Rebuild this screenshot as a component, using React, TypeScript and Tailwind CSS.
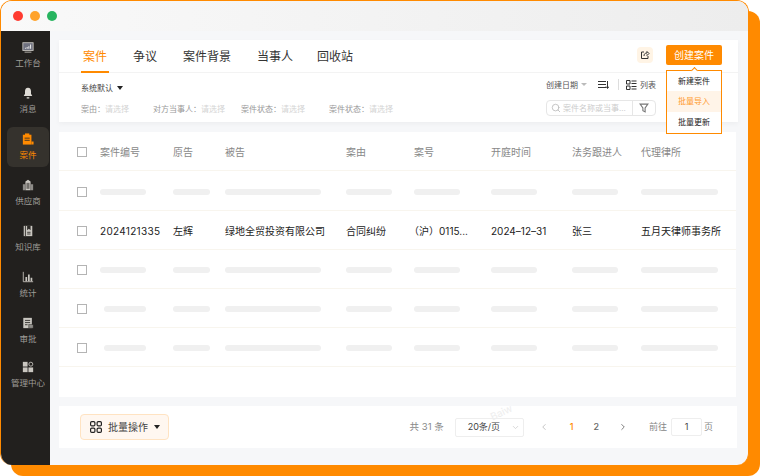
import { ChevronDown, ChevronLeft, ChevronRight, Search } from 'lucide-react';

const font = 'font-["Inter","Noto_Sans_CJK_SC",sans-serif]';

const navItems = [
  { label: '工作台', icon: 'desk' },
  { label: '消息', icon: 'bell' },
  { label: '案件', icon: 'case', active: true },
  { label: '供应商', icon: 'building' },
  { label: '知识库', icon: 'book' },
  { label: '统计', icon: 'chart' },
  { label: '审批', icon: 'doc' },
  { label: '管理中心', icon: 'grid', nudge: true },
];

function NavIcon({ name, active }: { name: string; active?: boolean }) {
  const c = active ? '#ff8a00' : '#c9c6c0';
  return (
    <svg width="12" height="12" viewBox="0 0 14 14" fill="none">
      {name === 'desk' && (
        <>
          <rect x="1" y="2" width="12" height="9" fill="#6f7180" stroke={c} strokeWidth="1" />
          <path d="M4 9V8M6 9V7M8 9V6M10 9V4" stroke="#e8e8e8" strokeWidth="1.2" />
          <path d="M3 13h8" stroke={c} strokeWidth="1" />
        </>
      )}
      {name === 'bell' && (
        <>
          <path d="M7 1c-2.5 0-3.5 2-3.5 4v3L2 10.5h10L10.5 8V5C10.5 3 9.5 1 7 1z" fill="#dedbd5" />
          <path d="M5.5 12h3v1.5h-3z" fill="#dedbd5" />
        </>
      )}
      {name === 'case' && (
        <>
          <rect x="1" y="2" width="10" height="11.5" fill={c} />
          <rect x="3.5" y="0.5" width="5" height="2.5" fill={c} />
          <path d="M3 6h6M3 8.5h6" stroke="#2c2a27" strokeWidth="1" />
          <path d="M11 10h2.5v3.5H11z" fill={c} />
        </>
      )}
      {name === 'building' && (
        <>
          <path d="M4 3l3-2 3 2v10H4z" fill={c} />
          <path d="M1 6h3v7H1zM10 6h3v7h-3z" fill="#8e8c88" />
          <path d="M6 4.5v7M8 4.5v7" stroke="#2c2a27" strokeWidth="1" />
        </>
      )}
      {name === 'book' && (
        <>
          <rect x="2" y="1" width="10" height="12" fill={c} />
          <path d="M4 1v12" stroke="#2c2a27" strokeWidth="1" />
          <path d="M6 1h4v5L8 4.5 6 6z" fill="#2c2a27" />
          <path d="M6 8.5h4M6 10.5h4" stroke="#2c2a27" strokeWidth="1" />
        </>
      )}
      {name === 'chart' && (
        <>
          <path d="M1.5 1v11.5H13" stroke={c} strokeWidth="1" />
          <path d="M4 7h2v5H4zM7 4h2v8H7zM10 8h2v4h-2z" fill={c} />
        </>
      )}
      {name === 'doc' && (
        <>
          <rect x="1.5" y="1" width="10" height="12" fill={c} />
          <path d="M3.5 4h6M3.5 6.5h6M3.5 9h3" stroke="#2c2a27" strokeWidth="1" />
          <rect x="8" y="9" width="5" height="4" fill="#8e8c88" stroke="#2c2a27" strokeWidth=".6" />
        </>
      )}
      {name === 'grid' && (
        <>
          <rect x="1" y="1" width="5.5" height="5.5" fill={c} />
          <rect x="1" y="7.5" width="5.5" height="5.5" fill={c} />
          <rect x="7.5" y="7.5" width="5.5" height="5.5" fill={c} />
          <circle cx="10.3" cy="3.7" r="2.3" stroke={c} strokeWidth="1" />
        </>
      )}
    </svg>
  );
}

function Sidebar() {
  return (
    <aside className="flex w-[49px] shrink-0 flex-col items-start gap-[6px] bg-[#22201e] pl-[6px] pt-[4px]">
      {navItems.map((item) => (
        <div
          key={item.label}
          className={`flex h-[40px] w-[42px] flex-col items-center justify-center gap-[5px] rounded-[6px] ${item.active ? 'bg-[#35322d]' : ''} ${item.nudge ? '-mt-[2px]' : ''}`}
        >
          <NavIcon name={item.icon} active={item.active} />
          <span
            className={`whitespace-nowrap text-[8.5px] leading-[11px] ${item.active ? 'text-[#ff8a00]' : 'text-[#9f9d98]'}`}
          >
            {item.label}
          </span>
        </div>
      ))}
    </aside>
  );
}

function Caret() {
  return <span className="inline-block border-x-[3.5px] border-t-[4px] border-x-transparent border-t-[#222]" />;
}

function Tabs() {
  const tabs = ['案件', '争议', '案件背景', '当事人', '回收站'];
  return (
    <div className="flex h-[33px] items-stretch border-b border-[#f3f3f3] pl-[22px]">
      <div className="flex gap-[22px]">
        {tabs.map((t, i) => (
          <div
            key={t}
            className={`flex h-[33px] items-center border-b-2 px-[2px] pt-[3px] text-[12px] ${i === 0 ? 'border-[#ff8a00] text-[#ff8a00]' : 'border-transparent text-[#333]'} ${i === 4 ? '-ml-[2px]' : ''}`}
          >
            {t}
          </div>
        ))}
      </div>
      <div className="ml-auto flex items-start gap-[13px] pr-[16px] pt-[5px]">
        <div className="mt-[2px] flex h-4 w-4 items-center justify-center rounded-[4px] bg-[#fff4e5]">
          <svg width="10" height="10" viewBox="0 0 10 10" fill="none" stroke="#333" strokeWidth="1">
            <path d="M4 2H1.5v6.5H8V6" />
            <path d="M4 6c0-2 1-3 3-3V1.5L9 3.5 7 5.5V4.5" />
          </svg>
        </div>
        <div className="flex h-5 w-14 items-center justify-center rounded-[2px] bg-[#ff8a00] text-[10px] text-white">
          创建案件
        </div>
      </div>
    </div>
  );
}

function Filters() {
  const fields = [
    { label: '案由\uFF1A', w: 'w-[72px]' },
    { label: '对方当事人\uFF1A', w: 'w-[88px]' },
    { label: '案件状态\uFF1A', w: 'w-[88px]' },
    { label: '案件状态\uFF1A', w: 'w-[70px]' },
  ];
  return (
    <div className="flex h-[49px] justify-between pl-[22px] pr-[82px]">
      <div className="pt-[10px]">
        <div className="flex h-[10px] items-center gap-[4px] text-[8px] text-[#444]">
          系统默认 <Caret />
        </div>
        <div className="mt-[11px] flex text-[8px] leading-[10px]">
          {fields.map((f, i) => (
            <div key={i} className={`${f.w} whitespace-nowrap`}>
              <span className="text-[#999]">{f.label}</span>
              <span className="text-[#d4d4d4]">请选择</span>
            </div>
          ))}
        </div>
      </div>
      <div className="flex w-[110px] flex-col pt-[6px]">
        <div className="flex h-[11px] items-center text-[8px] text-[#555]">
          <span>创建日期</span>
          <span className="ml-[3px] inline-block border-x-[3px] border-t-[3px] border-x-transparent border-t-[#bbb]" />
          <svg className="ml-[11px]" width="11" height="10" viewBox="0 0 11 10" fill="none" stroke="#333" strokeWidth="1">
            <path d="M0 1.5h8M0 4.5h8M0 7.5h8M9.5 1v7M8 6.5l1.5 2 1.5-2" />
          </svg>
          <span className="ml-[9px] h-[11px] w-px bg-[#ddd]" />
          <svg className="ml-[7px]" width="11" height="10" viewBox="0 0 11 10" fill="none" stroke="#333" strokeWidth="1">
            <path d="M.5.5h3.5v3.5H.5zM.5 6h3.5v3.5H.5zM5.5 1h5M5.5 3.5h5M5.5 6.5h5M5.5 9h5" />
          </svg>
          <span className="ml-[3px]">列表</span>
        </div>
        <div className="mt-[10px] flex h-[16px] w-[110px] items-center rounded-[4px] border border-[#e6e6e6] bg-white">
          <Search size={10} className="ml-[4px] shrink-0 text-[#bbb]" />
          <span className="ml-[2px] w-[69px] shrink-0 whitespace-nowrap text-[8px] text-[#ccc]">案件名称或当事...</span>
          <span className="flex h-full flex-1 items-center justify-center border-l border-[#e6e6e6]">
            <svg width="10" height="10" viewBox="0 0 9 9" fill="none" stroke="#777" strokeWidth="1">
              <path d="M1 1h7L5.5 4.5V8L3.5 7V4.5z" />
            </svg>
          </span>
        </div>
      </div>
    </div>
  );
}

const columns = [
  { label: '案件编号', w: 'w-[73px]', bar: 'w-[46px]', value: '2024121335', extra: 'tracking-[0.3px]' },
  { label: '原告', w: 'w-[52px]', bar: 'w-[37px]', value: '左辉', extra: '' },
  { label: '被告', w: 'w-[121px]', bar: 'w-[96px]', value: '绿地全贸投资有限公司', extra: '' },
  { label: '案由', w: 'w-[68px]', bar: 'w-[46px]', value: '合同纠纷', extra: '' },
  { label: '案号', w: 'w-[77px]', bar: 'w-[46px]', value: '\uFF08沪\uFF090115...', extra: '-ml-[5px]' },
  { label: '开庭时间', w: 'w-[81px]', bar: 'w-[46px]', value: '2024–12–31', extra: '' },
  { label: '法务跟进人', w: 'w-[69px]', bar: 'w-[46px]', value: '张三', extra: '' },
  { label: '代理律所', w: 'flex-1', bar: 'w-[77px]', value: '五月天律师事务所', extra: '' },
];

function Checkbox() {
  return <span className="mr-[13px] h-[10px] w-[10px] shrink-0 border border-[#b4b4b4] bg-white" />;
}

function Row({ kind, offset = 0, tall }: { kind: 'head' | 'skeleton' | 'data'; offset?: number; tall?: boolean }) {
  return (
    <div className={`flex items-center border-b border-[#f8f5ee] pl-[18px] pt-[2px] ${tall ? 'h-[40px]' : 'h-[39px]'}`}>
      <Checkbox />
      {columns.map((c, i) => (
        <div key={c.label} className={`${c.w} shrink-0`}>
          {kind === 'head' && <span className="block whitespace-nowrap text-[10px] leading-[12px] text-[#888]">{c.label}</span>}
          {kind === 'data' && <span className={`block whitespace-nowrap text-[10px] leading-[12px] text-[#222] ${c.extra}`}>{c.value}</span>}
          {kind === 'skeleton' && (
            <div
              className={`h-[6px] rounded-full bg-[#f0f0f0] ${c.bar}`}
              style={i === 0 && offset ? { marginLeft: offset, width: 42 } : undefined}
            />
          )}
        </div>
      ))}
    </div>
  );
}

function Pagination() {
  return (
    <div className="mr-[1px] mt-[9px] flex h-[42px] items-center bg-white pl-[21px] pr-[24px]">
      <div className="flex h-[26px] items-center gap-[6px] rounded-[4px] border border-[#ffe3c2] bg-[#fff7f0] pl-[9px] pr-[8px] text-[10px] text-[#444]">
        <svg width="12" height="12" viewBox="0 0 12 12" fill="none" stroke="#222" strokeWidth="1.2">
          <rect x=".6" y=".6" width="4.3" height="4.3" rx="1.2" />
          <rect x="7.1" y=".6" width="4.3" height="4.3" rx="1.2" />
          <rect x=".6" y="7.1" width="4.3" height="4.3" rx="1.2" />
          <rect x="7.1" y="7.1" width="4.3" height="4.3" rx="1.2" />
        </svg>
        <span>批量操作</span>
        <Caret />
      </div>
      <div className="ml-auto flex items-center text-[9px] text-[#888]">
        <span className="text-[9.5px]">共 31 条</span>
        <div className="ml-[11px] flex h-[19px] w-[69px] items-center justify-between rounded-[2px] border border-[#eee] pl-[12px] pr-[3px] text-[#444]">
          <span>20条/页</span>
          <ChevronDown size={9} className="text-[#ccc]" />
        </div>
        <ChevronLeft size={10} className="ml-[15px] text-[#bbb]" />
        <span className="ml-[21px] font-medium text-[#ff8a00]">1</span>
        <span className="ml-[20px] font-medium text-[#666]">2</span>
        <ChevronRight size={10} className="ml-[19px] text-[#666]" />
        <span className="ml-[21px]">前往</span>
        <span className="ml-[4px] flex h-[18px] w-[31px] items-center justify-center rounded-[2px] border border-[#eee] text-[#444]">1</span>
        <span className="ml-[2px]">页</span>
      </div>
    </div>
  );
}

function Menu() {
  return (
    <div className="absolute right-[26px] top-[39px] w-[56px] border border-[#ff8a00] bg-white text-center text-[8px] text-[#222]">
      <span className="absolute -top-[3px] left-[25px] h-[5px] w-[5px] rotate-45 border-l border-t border-[#ff8a00] bg-white" />
      <div className="h-[20px] leading-[20px]">新建案件</div>
      <div className="h-[21px] bg-[#fff4e8] leading-[21px] text-[#ff9a2e]">批量导入</div>
      <div className="h-[21px] leading-[21px]">批量更新</div>
    </div>
  );
}

export default function App() {
  return (
    <div className={`h-[476px] w-[760px] overflow-hidden bg-white ${font}`}>
      <div className="flex h-[465px] w-[749px] flex-col overflow-hidden rounded-[12px] border-x border-t border-[#ff8a00] bg-[#f6f7f9] shadow-[11px_11px_0_#ff8a00]">
        <div className="flex h-[30px] shrink-0 items-center gap-[7px] bg-linear-to-r from-[#f9f9f9] to-[#ededed] pl-[12px]">
          <span className="h-[10px] w-[10px] rounded-full bg-[#ff3b30]" />
          <span className="h-[10px] w-[10px] rounded-full bg-[#ffa32b]" />
          <span className="h-[10px] w-[10px] rounded-full bg-[#27b45f]" />
        </div>
        <div className="flex min-h-0 flex-1">
          <Sidebar />
          <main className="relative min-w-0 flex-1 pl-[9px] pr-[10px] pt-[9px]">
            <div className="bg-white shadow-[0_2px_5px_rgba(0,0,0,0.04)]">
              <Tabs />
              <Filters />
            </div>
            <div className="mr-[2px] mt-[10px] bg-white">
              <Row kind="head" />
              <Row kind="skeleton" tall />
              <Row kind="data" />
              <Row kind="skeleton" />
              <Row kind="skeleton" offset={4} />
              <Row kind="skeleton" offset={4} />
              <div className="h-[30px]" />
            </div>
            <Pagination />
            <span className="absolute left-[440px] top-[374px] -rotate-[25deg] text-[10px] text-[#eeeeee]">Baiw</span>
            <Menu />
          </main>
        </div>
      </div>
    </div>
  );
}
